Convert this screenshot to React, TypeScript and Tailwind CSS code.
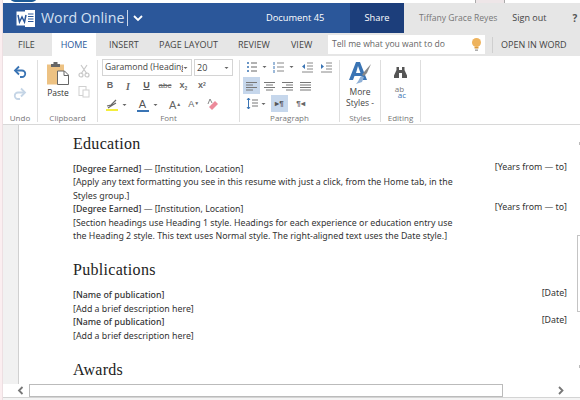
import React from "react";

const sans = "font-['Open_Sans','Noto_Sans',sans-serif]";

function Caret({ c = "#666" }: { c?: string }) {
  return <svg width="5" height="4" viewBox="0 0 5 4"><path d="M.5 1h4L2.5 3z" fill={c} /></svg>;
}

function Ic({ w = 16, h = 16, children, className = "" }: { w?: number; h?: number; children: React.ReactNode; className?: string }) {
  return <svg width={w} height={h} viewBox={`0 0 ${w} ${h}`} className={`shrink-0 ${className}`}>{children}</svg>;
}

function Group({ label, width, children }: { label: string; width: string; children: React.ReactNode }) {
  return (
    <div className={`${width} h-full flex flex-col shrink-0`}>
      <div className="flex-1 min-h-0 relative">{children}</div>
      <div className="h-[12px] text-center text-[8px] leading-[11px] text-[#777]">{label}</div>
    </div>
  );
}

function Sep() {
  return <div className="w-px h-[62px] mt-[4px] bg-[#dedede] shrink-0" />;
}

function TitleBar() {
  return (
    <div className="h-[30px] flex shrink-0 whitespace-nowrap">
      <div className="w-[347px] bg-[#2b579a] flex items-center text-white shrink-0">
        <div className="ml-[13px] w-[20px] h-[20px] flex items-center">
          <Ic w={20} h={19}>
            <rect x="9" y="1" width="10" height="17" fill="#fff" />
            <path d="M12 5h5.500M12 7.500h5.500M12 10h5.500M12 12.500h5.500" stroke="#2b579a" strokeWidth="1" />
            <rect x="0.500" y="2.500" width="11.500" height="14" fill="#fff" />
            <path d="M2 6l1.500 7 2.500-5 2.500 5L10 6" fill="none" stroke="#2b579a" strokeWidth="1.500" />
          </Ic>
        </div>
        <span className={`${sans} ml-[5px] w-[86px] text-[14.200px] leading-none text-[#d5e1f2]`}>Word Online</span>
        <div className="w-px h-[16px] bg-[#c9d6ea]" />
        <Ic w={12} h={10} className="ml-[4px]"><path d="M2 3l4 4 4-4" fill="none" stroke="#fff" strokeWidth="1.800" /></Ic>
        <span className={`${sans} ml-[122px] text-[9.300px]`}>Document 45</span>
      </div>
      <div className="w-[54px] bg-[#1c3e7b] flex items-center justify-center shrink-0">
        <span className={`${sans} text-white text-[9.300px]`}>Share</span>
      </div>
      <div className={`${sans} flex-1 bg-[#e6e6e6] flex items-center`}>
        <span className="ml-[15px] text-[8.600px] text-[#777]">Tiffany Grace Reyes</span>
        <span className="ml-[15px] text-[9px] text-[#444]">Sign out</span>
        <span className="ml-[26px] text-[10px] font-bold text-[#555]">?</span>
      </div>
    </div>
  );
}

function Tabs() {
  return (
    <div className={`${sans} h-[23px] bg-[#e6e6e6] flex items-center shrink-0 text-[9px] text-[#444] whitespace-nowrap`}>
      <span className="w-[49px] pl-[15px]">FILE</span>
      <span className="w-[44px] h-full bg-white flex items-center justify-center text-[#2b579a]">HOME</span>
      <span className="ml-[13px] w-[50px]">INSERT</span>
      <span className="w-[79px]">PAGE LAYOUT</span>
      <span className="w-[53px]">REVIEW</span>
      <span className="w-[37px]">VIEW</span>
      <div className="w-[157px] h-[19px] bg-white flex items-center pl-[4px] pr-[3px] justify-between text-[#666] text-[8.600px]">
        <span>Tell me what you want to do</span>
        <Ic w={11} h={15}>
          <circle cx="5.500" cy="5.500" r="4.500" fill="#eeb35d" />
          <rect x="3.500" y="10" width="4" height="1.500" fill="#d99a3f" />
          <rect x="4" y="12.500" width="3" height="1.300" fill="#999" />
        </Ic>
      </div>
      <div className="ml-[7px] w-px h-[16px] bg-[#cfcfcf]" />
      <span className="ml-[8px]">OPEN IN WORD</span>
    </div>
  );
}

function Ribbon() {
  return (
    <div className={`${sans} h-[69px] bg-white flex shrink-0 border-b border-[#d8d8d8]`}>
      <Group label="Undo" width="w-[34px]">
        <div className="flex flex-col items-center pt-[9px] gap-[8px]">
          <Ic w={14} h={14}><path d="M3 5.500h6a3.200 3.200 0 0 1 0 6.500H7" fill="none" stroke="#3a74b4" strokeWidth="1.800" /><path d="M6 1.500L2 5.500l4 4" fill="none" stroke="#3a74b4" strokeWidth="1.800" /></Ic>
          <Ic w={14} h={14}><path d="M11 5.500H5a3.200 3.200 0 0 0 0 6.500h2" fill="none" stroke="#c5d5e6" strokeWidth="1.800" /><path d="M8 1.500l4 4-4 4" fill="none" stroke="#c5d5e6" strokeWidth="1.800" /></Ic>
        </div>
      </Group>
      <Sep />
      <Group label="Clipboard" width="w-[59px]">
        <div className="flex pt-[6px]">
          <div className="w-[38px] flex flex-col items-center pl-[2px]">
            <Ic w={24} h={23}>
              <rect x="1" y="2.500" width="17" height="20" fill="#edc283" />
              <rect x="5" y="2" width="9" height="3" fill="#666" />
              <rect x="7.500" y="0" width="4" height="3" fill="#666" />
              <path d="M11.500 9h7l4 4v9.500h-11z" fill="#fff" stroke="#666" strokeWidth="1" />
              <path d="M18 9v4.500h4.500" fill="none" stroke="#666" strokeWidth="1" />
            </Ic>
            <span className="text-[8.500px] leading-[12px] mt-[2px] text-[#333]">Paste</span>
          </div>
          <div className="flex flex-col items-center gap-[7px] pt-[2px] pl-[2px]">
            <Ic w={12} h={14}><path d="M3 1l6 9M9 1l-6 9" stroke="#c8c8c8" strokeWidth="1.200" /><circle cx="3" cy="11" r="2" fill="none" stroke="#c8c8c8" strokeWidth="1.200" /><circle cx="9" cy="11" r="2" fill="none" stroke="#c8c8c8" strokeWidth="1.200" /></Ic>
            <Ic w={12} h={13}><rect x="1" y="1.500" width="7" height="9" fill="none" stroke="#d0d0d0" /><rect x="5" y="5" width="6" height="7" fill="#fff" stroke="#d0d0d0" /></Ic>
          </div>
        </div>
      </Group>
      <Sep />
      <Group label="Font" width="w-[141px]">
        <div className="pl-[4px] pt-[3px] flex gap-[2px]">
          <div className="w-[90px] h-[17px] border border-[#d4d4d4] flex items-center pl-[2px] pr-[3px] justify-between text-[8.600px] text-[#444] overflow-hidden whitespace-nowrap">
            <span className="w-[78px] overflow-hidden">Garamond (Heading</span><Caret />
          </div>
          <div className="w-[39px] h-[17px] border border-[#d4d4d4] flex items-center pl-[2px] pr-[3px] justify-between text-[9px] text-[#444]">
            <span>20</span><Caret />
          </div>
        </div>
        <div className="flex items-center h-[18px] mt-[1px] text-[#666] font-['Liberation_Sans',sans-serif] text-[9px]">
          <span className="w-[18px] ml-[3px] font-bold text-center">B</span>
          <span className="w-[18px] italic font-['Liberation_Serif',serif] font-bold text-[10px] text-center">I</span>
          <span className="w-[19px] font-bold underline text-center text-[#555]">U</span>
          <span className="w-[18px] line-through text-center text-[8px]">abc</span>
          <span className="w-[19px] font-bold text-center">x<sub className="text-[5px]">2</sub></span>
          <span className="w-[18px] font-bold text-center">x<sup className="text-[5px]">2</sup></span>
        </div>
        <div className="flex items-center h-[20px] ml-[7px]">
          <Ic w={14} h={14}><rect x="1" y="11" width="12" height="2" fill="#f4ee3c" /><path d="M2 8l4-1 5-5M3 10l3-2 5-3" fill="none" stroke="#666" strokeWidth="1.200" /></Ic>
          <span className="ml-[3px]"><Caret /></span>
          <div className="ml-[9px] w-[13px] flex flex-col items-center">
            <span className="font-['Liberation_Sans',sans-serif] text-[11px] leading-[11px] text-[#555]">A</span>
            <div className="w-[12px] h-[2px] bg-[#3a74b4]" />
          </div>
          <span className="ml-[4px]"><Caret /></span>
          <span className="ml-[11px] font-['Liberation_Sans',sans-serif] text-[11px] text-[#666]">A<sup className="text-[5px]">▲</sup></span>
          <span className="ml-[7px] font-['Liberation_Sans',sans-serif] text-[9px] text-[#666]">A<sup className="text-[5px]">▼</sup></span>
          <Ic w={13} h={14} className="ml-[7px]"><path d="M3 9l6-6 3 3-6 6z" fill="#ec8a9a" /><path d="M2 6l2-5 2 4" fill="none" stroke="#888" strokeWidth="1" /></Ic>
        </div>
      </Group>
      <Sep />
      <Group label="Paragraph" width="w-[99px]">
        <div className="flex items-center h-[20px] pt-[2px] pl-[6px]">
          <Ic w={12} h={12}><path d="M1 2h2M1 6h2M1 10h2" stroke="#3a74b4" strokeWidth="1.500" /><path d="M5 2h6M5 6h6M5 10h6" stroke="#666" /></Ic>
          <span className="ml-[4px]"><Caret /></span>
          <Ic w={12} h={12} className="ml-[6px]"><path d="M1 1v3M1 5v3M1 9v3" stroke="#3a74b4" /><path d="M4 2h7M4 6h7M4 10h7" stroke="#888" /></Ic>
          <span className="ml-[4px]"><Caret /></span>
          <Ic w={13} h={11} className="ml-[7px]"><path d="M6 1h6M6 4h6M6 7h6M1 10h11" stroke="#888" /><path d="M4 2L1 4.500 4 7" fill="#3a74b4" /></Ic>
          <Ic w={13} h={11} className="ml-[6px]"><path d="M6 1h6M6 4h6M6 7h6M1 10h11" stroke="#888" /><path d="M1 2l3 2.500L1 7" fill="#3a74b4" /></Ic>
        </div>
        <div className="flex items-center ml-[3px] h-[17px] mt-[1px]">
          <div className="w-[17px] h-[17px] bg-[#c6d7ec] flex items-center justify-center"><Ic w={11} h={10}><path d="M0 1.500h11M0 4h7M0 6.500h11M0 9h7" stroke="#777" /></Ic></div>
          <div className="w-[17px] flex justify-center ml-[1px]"><Ic w={11} h={10}><path d="M0 1.500h11M2 4h7M0 6.500h11M2 9h7" stroke="#777" /></Ic></div>
          <div className="w-[17px] flex justify-center ml-[1px]"><Ic w={11} h={10}><path d="M0 1.500h11M4 4h7M0 6.500h11M4 9h7" stroke="#777" /></Ic></div>
          <div className="w-[17px] flex justify-center ml-[1px]"><Ic w={11} h={10}><path d="M0 1.500h11M0 4h11M0 6.500h11M0 9h11" stroke="#777" /></Ic></div>
        </div>
        <div className="flex items-center ml-[6px] h-[17px] mt-[1px]">
          <Ic w={13} h={13}><path d="M2.500 1v11M1 3l1.500-2L4 3M1 10l1.500 2L4 10" fill="none" stroke="#3a74b4" /><path d="M6 3h6M6 6h6M6 9h6" stroke="#777" /></Ic>
          <span className="ml-[2px]"><Caret /></span>
          <div className="ml-[5px] w-[17px] h-[17px] bg-[#c6d7ec] flex items-center justify-center text-[8px] font-bold text-[#555] font-['Liberation_Sans',sans-serif]">▸¶</div>
          <div className="ml-[4px] w-[17px] text-center text-[8px] font-bold text-[#666] font-['Liberation_Sans',sans-serif]">¶◂</div>
        </div>
      </Group>
      <Sep />
      <Group label="Styles" width="w-[40px]">
        <div className="flex flex-col items-center pt-[5px]">
          <Ic w={24} h={25}>
            <path d="M1 19L8 1h4l7 18h-4l-1.500-4H6.500L5 19zM8 12h4.500L10 5z" fill="#3a74b4" />
            <path d="M23 3l-7 8-2 3 2 1 3-3z" fill="#888" />
            <path d="M13 15l3 1-2 5-6 2c2-2 3-5 5-8z" fill="#8fb0d6" />
          </Ic>
          <span className="text-[8.500px] leading-[11px] text-[#444]">More</span>
          <span className="text-[8.500px] leading-[11px] text-[#444] whitespace-nowrap">Styles -</span>
        </div>
      </Group>
      <Sep />
      <Group label="Editing" width="w-[39px]">
        <div className="flex flex-col items-center pt-[11px]">
          <Ic w={13} h={11}><path d="M2.500 0H5v3h3V0h2.500v3L13 8.500V11H8V6H5v5H0V8.500L2.500 3z" fill="#555" /></Ic>
          <div className="mt-[8px] text-[8px] leading-[6px] h-[6px] text-[#777] pr-[2px]">ab</div>
          <div className="text-[8px] leading-[6px] h-[6px] text-[#3a74b4] pl-[3px]">ac</div>
        </div>
      </Group>
      <Sep />
    </div>
  );
}

function Row({ left, right }: { left: React.ReactNode; right?: string }) {
  return (
    <div className="h-[13.400px] flex justify-between items-center whitespace-nowrap">
      <span>{left}</span>
      {right && <span className="mb-[4px]">{right}</span>}
    </div>
  );
}

function Heading({ children, className = "" }: { children: string; className?: string }) {
  return <div className={`font-['Liberation_Serif',serif] text-[16px] leading-[20px] tracking-[0.3px] text-[#222] ${className}`}>{children}</div>;
}

function Doc() {
  return (
    <div className="flex-1 min-h-0 flex overflow-hidden">
      <div className="w-[16px] bg-[#f1f1f1] border-r border-[#d0d0d0] shrink-0" />
      <div className="flex-1 relative bg-white pl-[54px] pr-[13px] pt-[9px] overflow-hidden text-[8.800px] text-[#333] font-['Noto_Sans','Open_Sans',sans-serif]">
        <Heading>Education</Heading>
        <div className="mt-[9px]">
          <Row left={<><b className="font-medium">[Degree Earned]</b> — [Institution, Location]</>} right="[Years from — to]" />
          <Row left="[Apply any text formatting you see in this resume with just a click, from the Home tab, in the" />
          <Row left="Styles group.]" />
          <Row left={<><b className="font-medium">[Degree Earned]</b> — [Institution, Location]</>} right="[Years from — to]" />
          <Row left="[Section headings use Heading 1 style. Headings for each experience or education entry use" />
          <Row left="the Heading 2 style. This text uses Normal style. The right-aligned text uses the Date style.]" />
        </div>
        <Heading className="mt-[17px]">Publications</Heading>
        <div className="mt-[9px]">
          <Row left={<b className="font-medium">[Name of publication]</b>} right="[Date]" />
          <Row left="[Add a brief description here]" />
          <Row left={<b className="font-medium">[Name of publication]</b>} right="[Date]" />
          <Row left="[Add a brief description here]" />
        </div>
        <Heading className="mt-[17px]">Awards</Heading>
        <div className="absolute right-0 top-[110px] w-[3px] h-[77px] border-l border-t border-b border-[#c4c4c4]" />
        <div className="absolute right-0 top-[17px] w-[1px] h-[3px] bg-[#bbb]" />
        <div className="absolute right-0 top-[240px] w-[1px] h-[3px] bg-[#bbb]" />
      </div>
    </div>
  );
}

function HScroll() {
  return (
    <div className="h-[16px] bg-[#f4f4f4] shrink-0">
      <div className="h-[14px] bg-white flex items-center border-b border-[#d4d4d4]">
        <div className="w-[26px] flex justify-end pr-[5px]"><Ic w={7} h={9}><path d="M5.500 1L2 4.500 5.500 8" fill="none" stroke="#777" strokeWidth="1.800" /></Ic></div>
        <div className="w-[474px] h-[13px] border border-[#bbb] bg-white" />
        <div className="ml-[54px] w-[10px]"><Ic w={8} h={9}><path d="M2 1l3.500 3.500L2 8" fill="none" stroke="#777" strokeWidth="1.800" /></Ic></div>
      </div>
    </div>
  );
}

export default function App() {
  return (
    <div className="relative w-[580px] h-[400px] overflow-hidden bg-white flex">
      <div className="w-[3px] bg-[#fbeef0] border-r border-[#eddfe2] shrink-0" />
      <div className="flex-1 flex flex-col pt-[3px]">
        <TitleBar />
        <Tabs />
        <Ribbon />
        <Doc />
        <HScroll />
      </div>
      <div className="absolute left-[10px] -top-[3px] w-[27px] h-[5px] rounded-b-full bg-[#1c5a96]" />
      <div className="absolute left-[475px] top-0 w-[30px] h-[3px] bg-[#eee6e8] border-x border-[#aaa]" />
    </div>
  );
}
